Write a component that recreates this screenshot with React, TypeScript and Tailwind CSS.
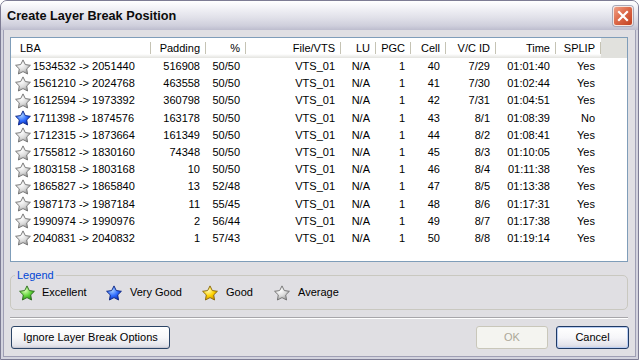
import React, { useId } from "react";

type StarKind = "silver" | "blue" | "green" | "yellow";

const starColors: Record<StarKind, { l: string; m: string; d: string; s: string }> = {
  silver: { l: "#ffffff", m: "#dcdcdc", d: "#9c9c9c", s: "#6f6f6f" },
  blue: { l: "#a8d0ff", m: "#2f6cff", d: "#0a2fb8", s: "#0a2380" },
  green: { l: "#dcffb8", m: "#63d63c", d: "#2a8f1a", s: "#2b6b1b" },
  yellow: { l: "#fffcc0", m: "#ffd400", d: "#d09200", s: "#86640a" },
};

function Star({ kind }: { kind: StarKind }) {
  const raw = useId();
  const id = "g" + raw.replace(/[^a-zA-Z0-9]/g, "");
  const c = starColors[kind];
  return (
    <svg width="16" height="16" viewBox="0 0 16 16" className="shrink-0">
      <defs>
        <radialGradient id={id} cx="0.38" cy="0.32" r="0.7">
          <stop offset="0" stopColor={c.l} />
          <stop offset="0.55" stopColor={c.m} />
          <stop offset="1" stopColor={c.d} />
        </radialGradient>
      </defs>
      <path
        d="M8 0.9 L10.29 5.54 L15.42 6.29 L11.71 9.91 L12.58 15.01 L8 12.6 L3.42 15.01 L4.29 9.91 L0.58 6.29 L5.71 5.54 Z"
        fill={`url(#${id})`}
        stroke={c.s}
        strokeWidth="0.9"
        strokeLinejoin="round"
      />
    </svg>
  );
}

const rows: string[][] = [
  ["1534532 -> 2051440", "516908", "50/50", "VTS_01", "N/A", "1", "40", "7/29", "01:01:40", "Yes"],
  ["1561210 -> 2024768", "463558", "50/50", "VTS_01", "N/A", "1", "41", "7/30", "01:02:44", "Yes"],
  ["1612594 -> 1973392", "360798", "50/50", "VTS_01", "N/A", "1", "42", "7/31", "01:04:51", "Yes"],
  ["1711398 -> 1874576", "163178", "50/50", "VTS_01", "N/A", "1", "43", "8/1", "01:08:39", "No"],
  ["1712315 -> 1873664", "161349", "50/50", "VTS_01", "N/A", "1", "44", "8/2", "01:08:41", "Yes"],
  ["1755812 -> 1830160", "74348", "50/50", "VTS_01", "N/A", "1", "45", "8/3", "01:10:05", "Yes"],
  ["1803158 -> 1803168", "10", "50/50", "VTS_01", "N/A", "1", "46", "8/4", "01:11:38", "Yes"],
  ["1865827 -> 1865840", "13", "52/48", "VTS_01", "N/A", "1", "47", "8/5", "01:13:38", "Yes"],
  ["1987173 -> 1987184", "11", "55/45", "VTS_01", "N/A", "1", "48", "8/6", "01:17:31", "Yes"],
  ["1990974 -> 1990976", "2", "56/44", "VTS_01", "N/A", "1", "49", "8/7", "01:17:38", "Yes"],
  ["2040831 -> 2040832", "1", "57/43", "VTS_01", "N/A", "1", "50", "8/8", "01:19:14", "Yes"],
];

const headers: { label: string; cls: string }[] = [
  { label: "Padding", cls: "w-[54px]" },
  { label: "%", cls: "w-[39px]" },
  { label: "File/VTS", cls: "w-[94px]" },
  { label: "LU", cls: "w-[34px]" },
  { label: "PGC", cls: "w-[34px]" },
  { label: "Cell", cls: "w-[34px]" },
  { label: "V/C ID", cls: "w-[49px]" },
  { label: "Time", cls: "w-[59px]" },
  { label: "SPLIP", cls: "w-[44px]" },
];

const dataCls = [
  "w-[55px]",
  "w-[40px]",
  "w-[95px]",
  "w-[35px]",
  "w-[35px]",
  "w-[35px]",
  "w-[50px]",
  "w-[60px]",
  "w-[45px]",
];

function Sep() {
  return <div className="w-px my-[4px] bg-[#c5c3b4] shrink-0" />;
}

export default function App() {
  return (
    <div className="w-[639px] h-[360px] flex flex-col rounded-t-[7px] overflow-hidden border border-[#7d7c94] bg-[#e0dfe3] text-black font-['Liberation_Sans',Arial,sans-serif] text-[11px] leading-[13px]">
      {/* Title bar */}
      <div className="h-[29px] shrink-0 flex items-center justify-between pl-[6px] pr-[5px] bg-[linear-gradient(to_bottom,#ffffff_0%,#f4f4f8_20%,#e2e2ea_55%,#cfcfdc_85%,#bdbdce_100%)]">
        <div className="font-bold text-[12.7px] text-[#0c0c0c] pt-[1px]">Create Layer Break Position</div>
        <div className="w-[20px] h-[20px] rounded-[3px] border border-[#f6e6e0] shadow-[0_0_0_1px_#a8a8b8] bg-[linear-gradient(135deg,#f0a086_0%,#dd6a4a_45%,#c2401f_100%)] flex items-center justify-center">
          <svg width="12" height="12" viewBox="0 0 12 12">
            <path d="M2 2 L10 10 M10 2 L2 10" stroke="#ffffff" strokeWidth="2.2" strokeLinecap="square" />
          </svg>
        </div>
      </div>

      {/* Body with frame */}
      <div className="flex-1 flex flex-col border-x-[2px] border-b-[2px] border-[#d3d3de]">
        <div className="flex-1 flex flex-col border-x border-b border-[#9f9fb4] pl-[6px] pr-[7px] pt-[7px]">
          {/* List view */}
          <div className="h-[225px] shrink-0 border border-[#7f9db9] bg-white flex flex-col">
            <div className="h-[20px] shrink-0 flex bg-[linear-gradient(to_bottom,#ffffff_0%,#ffffff_80%,#f1f1ef_90%,#e3e3df_100%)]">
              <div className="w-[139px] shrink-0 pl-[9px] flex items-center">LBA</div>
              <Sep />
              {headers.map((h) => (
                <React.Fragment key={h.label}>
                  <div className={`${h.cls} shrink-0 pr-[5px] flex items-center justify-end`}>{h.label}</div>
                  <Sep />
                </React.Fragment>
              ))}
              <div className="flex-1 bg-[#e1e1dd]" />
            </div>
            <div className="flex flex-col">
              {rows.map((r, i) => (
                <div key={i} className="h-[17.2px] flex items-center">
                  <div className="w-[140px] shrink-0 pl-[4px] flex items-center">
                    <Star kind={i === 3 ? "blue" : "silver"} />
                    <span className="ml-[2px]">{r[0]}</span>
                  </div>
                  {r.slice(1).map((v, j) => (
                    <div key={j} className={`${dataCls[j]} shrink-0 pr-[6px] text-right`}>
                      {v}
                    </div>
                  ))}
                </div>
              ))}
            </div>
          </div>

          {/* Legend group */}
          <div className="relative mt-[13px] h-[35px] shrink-0 rounded-[5px] border border-[#c9c8c0] flex items-center pl-[8px]">
            <div className="absolute left-[4px] -top-[7px] px-[2px] bg-[#e0dfe3] text-[#0046d5]">Legend</div>
            <div className="w-[87px] flex items-center">
              <Star kind="green" />
              <span className="ml-[7px]">Excellent</span>
            </div>
            <div className="w-[96px] flex items-center">
              <Star kind="blue" />
              <span className="ml-[8px]">Very Good</span>
            </div>
            <div className="w-[72px] flex items-center">
              <Star kind="yellow" />
              <span className="ml-[8px]">Good</span>
            </div>
            <div className="flex items-center">
              <Star kind="silver" />
              <span className="ml-[8px]">Average</span>
            </div>
          </div>

          {/* Etched separator */}
          <div className="mt-[7px] h-[2px] shrink-0 border-t border-[#a7a6aa] border-b border-b-white" />

          {/* Buttons */}
          <div className="mt-[7px] h-[23px] shrink-0 flex items-stretch">
            <button className="ml-[1px] w-[159px] rounded-[3px] border border-[#2b4466] bg-[linear-gradient(to_bottom,#ffffff_0%,#f7f7f9_50%,#e6e6ec_85%,#d4d4dc_100%)] shadow-[inset_0_-1px_0_#c8c8d4]">
              Ignore Layer Break Options
            </button>
            <div className="flex-1" />
            <button className="w-[72px] rounded-[3px] border border-[#c9c7ba] bg-[#f4f4f0] text-[#aca899]">OK</button>
            <button className="ml-[8px] mr-[-1px] w-[73px] rounded-[3px] border border-[#1f3a66] bg-[linear-gradient(to_bottom,#ffffff_0%,#f6f6f9_50%,#e4e4ec_85%,#d2d2dc_100%)] shadow-[inset_0_0_0_1px_#b9cdf2]">
              Cancel
            </button>
          </div>
        </div>
      </div>
    </div>
  );
}
